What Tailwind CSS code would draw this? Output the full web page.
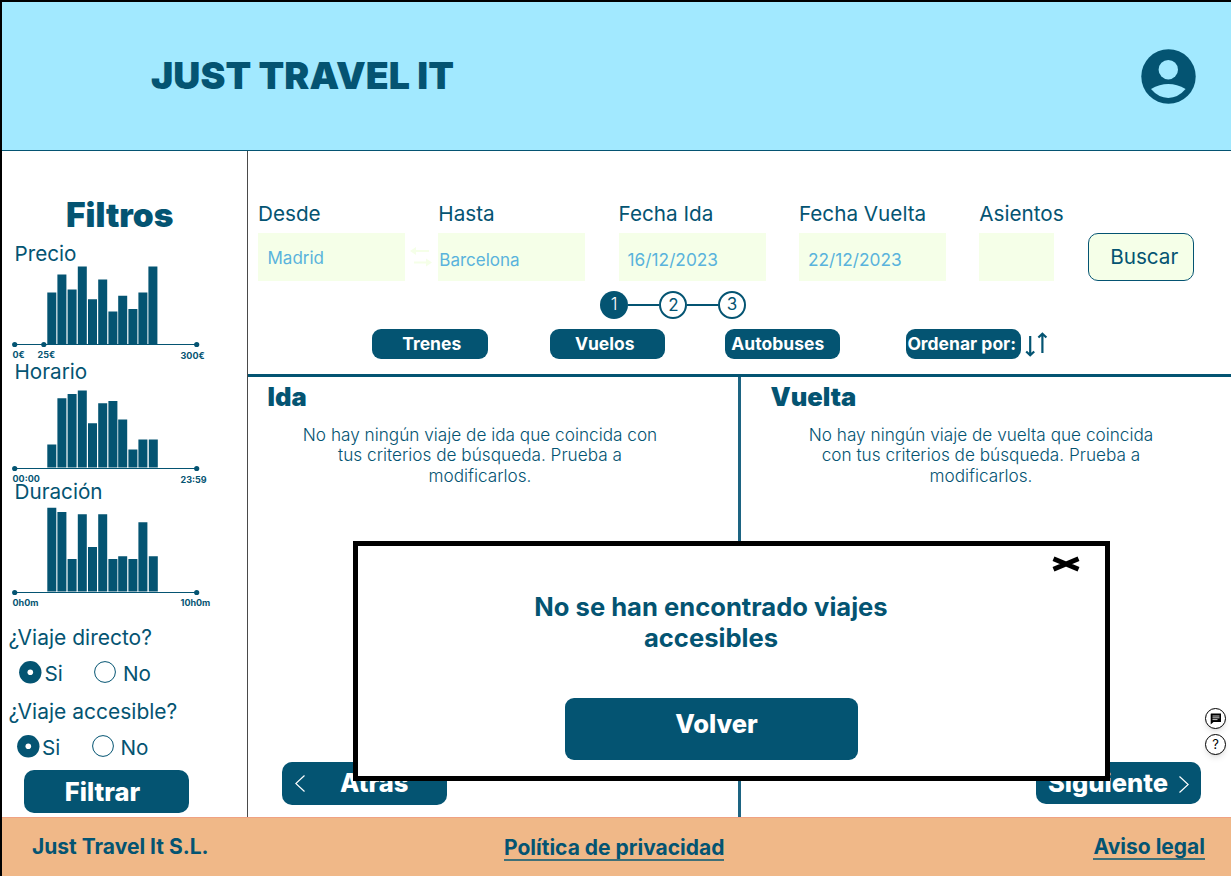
<!DOCTYPE html>
<html lang="es">
<head>
<meta charset="utf-8">
<title>Just Travel It</title>
<script src="https://cdn.jsdelivr.net/npm/@tailwindcss/browser@4"></script>
</head>
<body class="bg-white">
<div class="relative flex h-[876px] w-[1231px] flex-col overflow-hidden border-t-2 border-l-2 border-black bg-white font-['Inter',sans-serif] text-[#045472]">

  <header class="flex h-[149px] shrink-0 items-center justify-between border-b-[1.5px] border-[#045472] bg-[#a2e9ff] pr-[35px] pl-[149px]">
    <h1 class="text-[37.500px] leading-none font-black whitespace-nowrap">JUST TRAVEL IT</h1>
    <svg class="size-[55px]" viewBox="0 0 55 55"><circle cx="27.5" cy="27.5" r="27.2" fill="#045472"/><circle cx="27.3" cy="20.7" r="9.7" fill="#a2e9ff"/><path d="M10 40Q27.3 30 44.600 40Q37 48.900 27.300 48.900Q17.500 48.900 10 40Z" fill="#a2e9ff"/></svg>
  </header>

  <div class="flex h-[666px] shrink-0">
    <aside class="flex w-[246px] shrink-0 flex-col border-r border-[#4a4a4a] pt-[44px]">
      <h2 class="h-[46px] pl-[64px] text-[33.500px] leading-[40px] font-black">Filtros</h2>

      <section class="h-[118px] shrink-0">
        <h3 class="pl-[12.500px] text-[20.700px] leading-[26px]">Precio</h3>
        <svg class="-mt-px block h-[83px] w-[245px]" viewBox="2 266 245 83" fill="#045472"><path d="M47.300 292.400h9V344h-9zM57.400 274.400h9V344h-9zM67.600 289.500h9V344h-9zM77.800 266.500h9V344h-9zM88 299.200h9V344h-9zM98.200 279.400h9V344h-9zM108.400 311.400h9V344h-9zM118.200 295.700h9V344h-9zM128.400 309h9V344h-9zM138.400 292.500h9V344h-9zM148.400 266.500h9V344h-9z"/><path d="M15 344h182v1H15z"/><circle cx="14.700" cy="344.500" r="2.600"/><circle cx="43.800" cy="344.500" r="2.600"/><circle cx="196.700" cy="344.500" r="2.600"/></svg>
        <div class="flex pl-[10.500px] text-[9px] leading-[11px] font-bold"><span class="w-[25px]">0€</span><span class="w-[143px]">25€</span><span class="pt-px">300€</span></div>
      </section>
      <section class="h-[120px] shrink-0">
        <h3 class="pl-[12.500px] text-[20.700px] leading-[26px]">Horario</h3>
        <svg class="-mt-px block h-[89px] w-[245px]" viewBox="2 384 245 89" fill="#045472"><path d="M47.300 444.600h9V467.600h-9zM57.400 398.200h9V467.600h-9zM67.600 394h9V467.600h-9zM77.800 390.600h9V467.600h-9zM88 423.300h9V467.600h-9zM98.200 403.300h9V467.600h-9zM108.400 401h9V467.600h-9zM118.200 419.600h9V467.600h-9zM128.400 449.600h9V467.600h-9zM138.400 439.400h9V467.600h-9zM148.800 439.400h9V467.600h-9z"/><path d="M15 468h182v1H15z"/><circle cx="14.700" cy="468.500" r="2.600"/><circle cx="196.700" cy="468.500" r="2.600"/></svg>
        <div class="flex pl-[10.500px] text-[9px] leading-[11px] font-bold"><span class="w-[168px]">00:00</span><span class="pt-px">23:59</span></div>
      </section>
      <section class="h-[146px] shrink-0">
        <h3 class="pl-[12.500px] text-[20.700px] leading-[26px]">Duración</h3>
        <svg class="-mt-px block h-[93px] w-[245px]" viewBox="2 504 245 93" fill="#045472"><path d="M47.300 507.700h9V591.600h-9zM57.400 512h9V591.600h-9zM67.600 559h9V591.600h-9zM77.800 514.300h9V591.600h-9zM88 547h9V591.600h-9zM98.200 514.300h9V591.600h-9zM108.400 559h9V591.600h-9zM118.200 556.300h9V591.600h-9zM128.400 559h9V591.600h-9zM138.400 522.300h9V591.600h-9zM148.800 556.300h9V591.600h-9z"/><path d="M15 592h182v1H15z"/><circle cx="14.700" cy="592.500" r="2.600"/><circle cx="196.700" cy="592.500" r="2.600"/></svg>
        <div class="flex pl-[10.500px] text-[9px] leading-[11px] font-bold"><span class="w-[168px]">0h0m</span><span>10h0m</span></div>
      </section>

      <p class="pl-[6.500px] text-[21px] leading-[26px]">¿Viaje directo?</p>
      <div class="mt-[9px] flex h-[24px] items-center pl-[17px] text-[20.700px] leading-[24px]">
        <svg class="size-[23px]" viewBox="0 0 23 23"><circle cx="11.300" cy="11.300" r="11.200" fill="#045472"/><circle cx="11.300" cy="11.300" r="2.800" fill="#fff"/></svg>
        <span class="w-[51px] pt-[3px] pl-[2.500px]">Si</span>
        <svg class="size-[23px]" viewBox="0 0 23 23"><circle cx="12" cy="11" r="10.400" fill="none" stroke="#045472"/></svg>
        <span class="pt-[3px] pl-[7px]">No</span>
      </div>
      <p class="mt-[15px] pl-[6.500px] text-[21px] leading-[26px]">¿Viaje accesible?</p>
      <div class="mt-[9px] flex h-[24px] items-center pl-[14.500px] text-[20.700px] leading-[24px]">
        <svg class="size-[23px]" viewBox="0 0 23 23"><circle cx="11.300" cy="11.300" r="11.200" fill="#045472"/><circle cx="11.300" cy="11.300" r="2.800" fill="#fff"/></svg>
        <span class="w-[51px] pt-[3px] pl-[2.500px]">Si</span>
        <svg class="size-[23px]" viewBox="0 0 23 23"><circle cx="12" cy="11" r="10.400" fill="none" stroke="#045472"/></svg>
        <span class="pt-[3px] pl-[7px]">No</span>
      </div>
      <button class="mt-[12px] ml-[21.500px] h-[43px] w-[165px] shrink-0 rounded-[10px] bg-[#045472] pr-[7px] text-[25.500px] leading-[44px] font-extrabold text-white">Filtrar</button>
    </aside>

    <main class="flex min-w-0 flex-1 flex-col">
      <div class="flex h-[130px] shrink-0 pt-[50px] pl-[10px]">
        <div class="w-[180.300px]"><label class="block h-[32px] text-[20.700px] leading-[26px]">Desde</label><div class="h-[48px] w-[147px] bg-[#f5ffe8] pl-[9.500px] text-[17px] leading-[51px] text-[#59b3dc]">Madrid</div></div>
        <div class="w-[180.300px]"><label class="block h-[32px] text-[20.700px] leading-[26px]">Hasta</label><div class="relative h-[48px] w-[147px] bg-[#f5ffe8] pl-[1px] text-[17px] leading-[55px] text-[#59b3dc]">Barcelona<svg class="absolute top-[13px] -left-[28px] h-[22px] w-[24px]" viewBox="0 0 24 22" fill="#f5ffe8"><path d="M0 5l6-4v3h13v2H6v3zM4 15.500h12v-3l6 4-6 4v-3H4z"/></svg></div></div>
        <div class="w-[180.300px]"><label class="block h-[32px] text-[20.700px] leading-[26px]">Fecha Ida</label><div class="h-[48px] w-[147px] bg-[#f5ffe8] pl-[9px] text-[17.300px] leading-[53px] text-[#59b3dc]">16/12/2023</div></div>
        <div class="w-[180.300px]"><label class="block h-[32px] text-[20.700px] leading-[26px]">Fecha Vuelta</label><div class="h-[48px] w-[147px] bg-[#f5ffe8] pl-[9px] text-[17.300px] leading-[53px] text-[#59b3dc]">22/12/2023</div></div>
        <div class="w-[109px]"><label class="block h-[32px] text-[20.700px] leading-[26px]">Asientos</label><div class="h-[48px] w-[75px] bg-[#f5ffe8]"></div></div>
        <button class="mt-[32px] h-[48px] w-[106px] rounded-[10px] border border-[#045472] bg-[#f5ffe8] pl-[6px] text-[20.700px] leading-[46px]">Buscar</button>
      </div>

      <div class="flex h-[48px] shrink-0 items-center pl-[352px] text-[17px]">
        <span class="flex size-[28px] items-center justify-center rounded-full bg-[#045472] font-light text-white">1</span>
        <span class="h-[2px] w-[31px] bg-[#045472]"></span>
        <span class="flex size-[28px] items-center justify-center rounded-full border-[2px] border-[#045472] pt-px pl-px">2</span>
        <span class="h-[2px] w-[31px] bg-[#045472]"></span>
        <span class="flex size-[28px] items-center justify-center rounded-full border-[2px] border-[#045472]">3</span>
      </div>

      <div class="flex h-[45px] shrink-0 pl-[124px] text-[17.500px] font-bold whitespace-nowrap text-white">
        <button class="mr-[62px] h-[30px] w-[115.500px] rounded-[9px] bg-[#045472] pb-px pl-[4px] leading-[27px]">Trenes</button>
        <button class="mr-[59.500px] h-[30px] w-[115.500px] rounded-[9px] bg-[#045472] pr-[5px] pb-px leading-[27px]">Vuelos</button>
        <button class="mr-[65.500px] h-[30px] w-[115.500px] rounded-[9px] bg-[#045472] pr-[9px] pb-px leading-[27px]">Autobuses</button>
        <button class="h-[30px] w-[115.500px] rounded-[9px] bg-[#045472] pr-[3px] pb-px leading-[27px]">Ordenar por:</button>
        <svg class="mt-[2px] ml-[4px] h-[28px] w-[24px]" viewBox="0 0 24 28" fill="none" stroke="#045472" stroke-width="2.200"><path d="M5.200 5v19M1.200 20.500l4 3.800 4-3.800M17.400 22V3M13.400 6.500l4-3.800 4 3.800"/></svg>
      </div>

      <div class="flex flex-1 border-t-[3px] border-[#045472]">
        <section class="flex w-[493px] flex-col border-r-[3px] border-[#1d6482] pt-[5px]">
          <h2 class="pl-[19.500px] text-[25.500px] leading-[30px] font-black">Ida</h2>
          <p class="mt-[13px] pr-[26px] text-center text-[17.200px] leading-[20.400px] font-light whitespace-nowrap">No hay ningún viaje de ida que coincida con<br>tus criterios de búsqueda. Prueba a<br>modificarlos.</p>
          <button class="mt-auto mb-[12px] ml-[34px] flex h-[43px] w-[165px] items-center rounded-[10px] bg-[#045472] pl-[13px] text-[25.500px] font-extrabold text-white">
            <svg class="h-[17px] w-[10px]" viewBox="0 0 10 17" fill="none" stroke="#fff" stroke-width="1.200"><path d="M9.500 .5L.8 8.500l8.700 8"/></svg>
            <span class="pl-[35px]">Atrás</span>
          </button>
        </section>
        <section class="flex flex-1 flex-col pt-[5px]">
          <h2 class="pl-[29.500px] text-[25.500px] leading-[30px] font-black">Vuelta</h2>
          <p class="mt-[13px] pr-[10px] text-center text-[17.200px] leading-[20.400px] font-light whitespace-nowrap">No hay ningún viaje de vuelta que coincida<br>con tus criterios de búsqueda. Prueba a<br>modificarlos.</p>
          <button class="mt-auto mr-[30px] mb-[13px] flex h-[42px] w-[165px] items-center justify-between self-end rounded-[10px] bg-[#045472] pr-[12px] pl-[12px] text-[25.500px] font-extrabold text-white">
            <span class="pt-px">Siguiente</span>
            <svg class="mt-0.5 h-[17px] w-[10px]" viewBox="0 0 10 17" fill="none" stroke="#fff" stroke-width="1.200"><path d="M.5 .5l8.700 8-8.700 8"/></svg>
          </button>
        </section>
      </div>
    </main>
  </div>

  <footer class="flex flex-1 items-start border-t border-[#f0a283] bg-[#f0b888] pt-[16px] pr-[26px] pl-[30px] text-[21px] leading-[25px] font-bold whitespace-nowrap">
    <span class="w-[472px]">Just Travel It S.L.</span>
    <a class="mt-px h-[26px] border-b-2 border-[#3f7078]">Política de privacidad</a>
    <a class="ml-auto h-[26px] border-b-2 border-[#3f7078]">Aviso legal</a>
  </footer>

  <!-- Aviso sin resultados -->
  <div class="absolute top-[539px] left-[351px] flex h-[240px] w-[757px] flex-col items-center border-[5px] border-black bg-white">
    <svg class="absolute top-[10px] right-[24px] h-[16px] w-[30px]" viewBox="0 0 30 16" stroke="#000" stroke-width="4.800"><path d="M2.500 2.700L27.500 13.300M27.500 2.700L2.500 13.300"/></svg>
    <p class="mt-[45px] mr-[41px] text-center text-[25.600px] leading-[31px] font-bold">No se han encontrado viajes<br>accesibles</p>
    <button class="mt-[45px] mr-[40px] h-[62px] w-[293px] rounded-[9px] bg-[#045472] pb-[9px] pl-[10px] text-[25.500px] font-extrabold text-white">Volver</button>
  </div>

  <!-- Botones flotantes -->
  <div class="absolute top-[706px] left-[1203px] flex flex-col gap-[5px]">
    <span class="flex size-[21px] items-center justify-center rounded-full border border-black bg-white shadow-md"><svg class="size-[12px]" viewBox="0 0 12 12"><path d="M1 .5h10v8.500H3.500L.7 11.500V1z" fill="#000"/><path d="M2.500 3h7M2.500 4.800h7M2.500 6.600h5" stroke="#fff" stroke-width=".8"/></svg></span>
    <span class="flex size-[21px] items-center justify-center rounded-full border border-black bg-white text-[13px] text-black shadow-md">?</span>
  </div>
</div>
</body>
</html>
